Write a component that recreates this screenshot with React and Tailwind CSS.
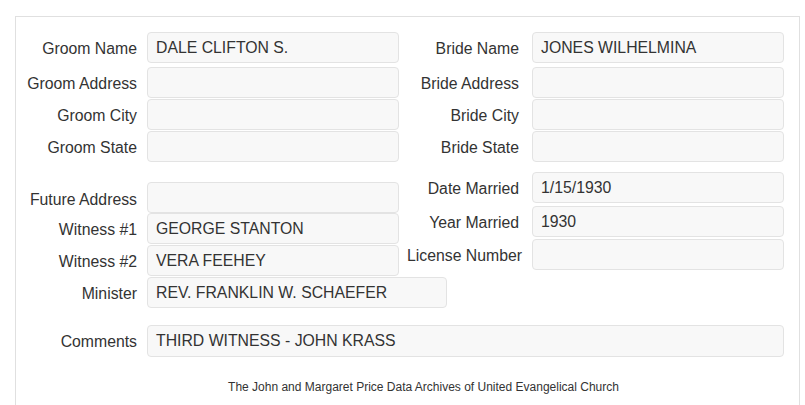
import React from "react";

function Field({ label, value = "", labelW, gap, inputW = 252, h = 31, className = "" }) {
  return (
    <div className={`flex items-center ${className}`}>
      <div className="shrink-0 relative top-[1px] text-right text-[#333] whitespace-nowrap" style={{ width: labelW }}>
        {label}
      </div>
      <div
        className="shrink-0 flex items-center px-2 bg-[#f8f8f8] border border-[#e3e3e3] rounded-[4px] text-[#333] whitespace-nowrap"
        style={{ marginLeft: gap, width: inputW, height: h }}
      >
        {value}
      </div>
    </div>
  );
}

export default function App() {
  const L = { labelW: 121, gap: 10 };
  const R = { labelW: 120, gap: 13 };
  return (
    <div
      className="w-[805px] h-[405px] overflow-hidden bg-white pl-[15px] pt-[16px] text-[15.8px] leading-none"
      style={{ fontFamily: '"Liberation Sans", Arial, sans-serif' }}
    >
      <div className="w-[785px] h-[420px] border border-[#e0e0e0] pt-[15px]">
        <div className="flex">
          <div className="w-[383px] shrink-0 flex flex-col">
            <Field label="Groom Name" value="DALE CLIFTON S." {...L} className="mb-[4px]" />
            <Field label="Groom Address" {...L} className="mb-[1px]" />
            <Field label="Groom City" {...L} className="mb-[1px]" />
            <Field label="Groom State" {...L} />
          </div>
          <div className="flex flex-col">
            <Field label="Bride Name" value="JONES WILHELMINA" {...R} className="mb-[4px]" />
            <Field label="Bride Address" {...R} className="mb-[1px]" />
            <Field label="Bride City" {...R} className="mb-[1px]" />
            <Field label="Bride State" {...R} />
          </div>
        </div>
        <div className="flex items-start">
          <div className="w-[383px] shrink-0 flex flex-col mt-[20px]">
            <Field label={<span className="relative top-[1px]">Future Address</span>} {...L} />
            <Field label="Witness #1" value="GEORGE STANTON" {...L} className="mb-[1px]" />
            <Field label="Witness #2" value="VERA FEEHEY" {...L} className="mb-[1px]" />
            <Field label="Minister" value="REV. FRANKLIN W. SCHAEFER" {...L} inputW={300} />
          </div>
          <div className="flex flex-col mt-[10px]">
            <Field label="Date Married" value="1/15/1930" {...R} className="mb-[3px]" />
            <Field label="Year Married" value="1930" {...R} className="mb-[2px]" />
            <Field label={<span className="relative left-[3px]">License Number</span>} {...R} />
          </div>
        </div>
        <Field
          label="Comments"
          value="THIRD WITNESS - JOHN KRASS"
          {...L}
          inputW={637}
          h={32}
          className="mt-[17px]"
        />
        <div className="mt-[23px] text-[12px] text-[#333] leading-[14px] pl-[32px] text-center">
          The John and Margaret Price Data Archives of United Evangelical Church
        </div>
      </div>
    </div>
  );
}
